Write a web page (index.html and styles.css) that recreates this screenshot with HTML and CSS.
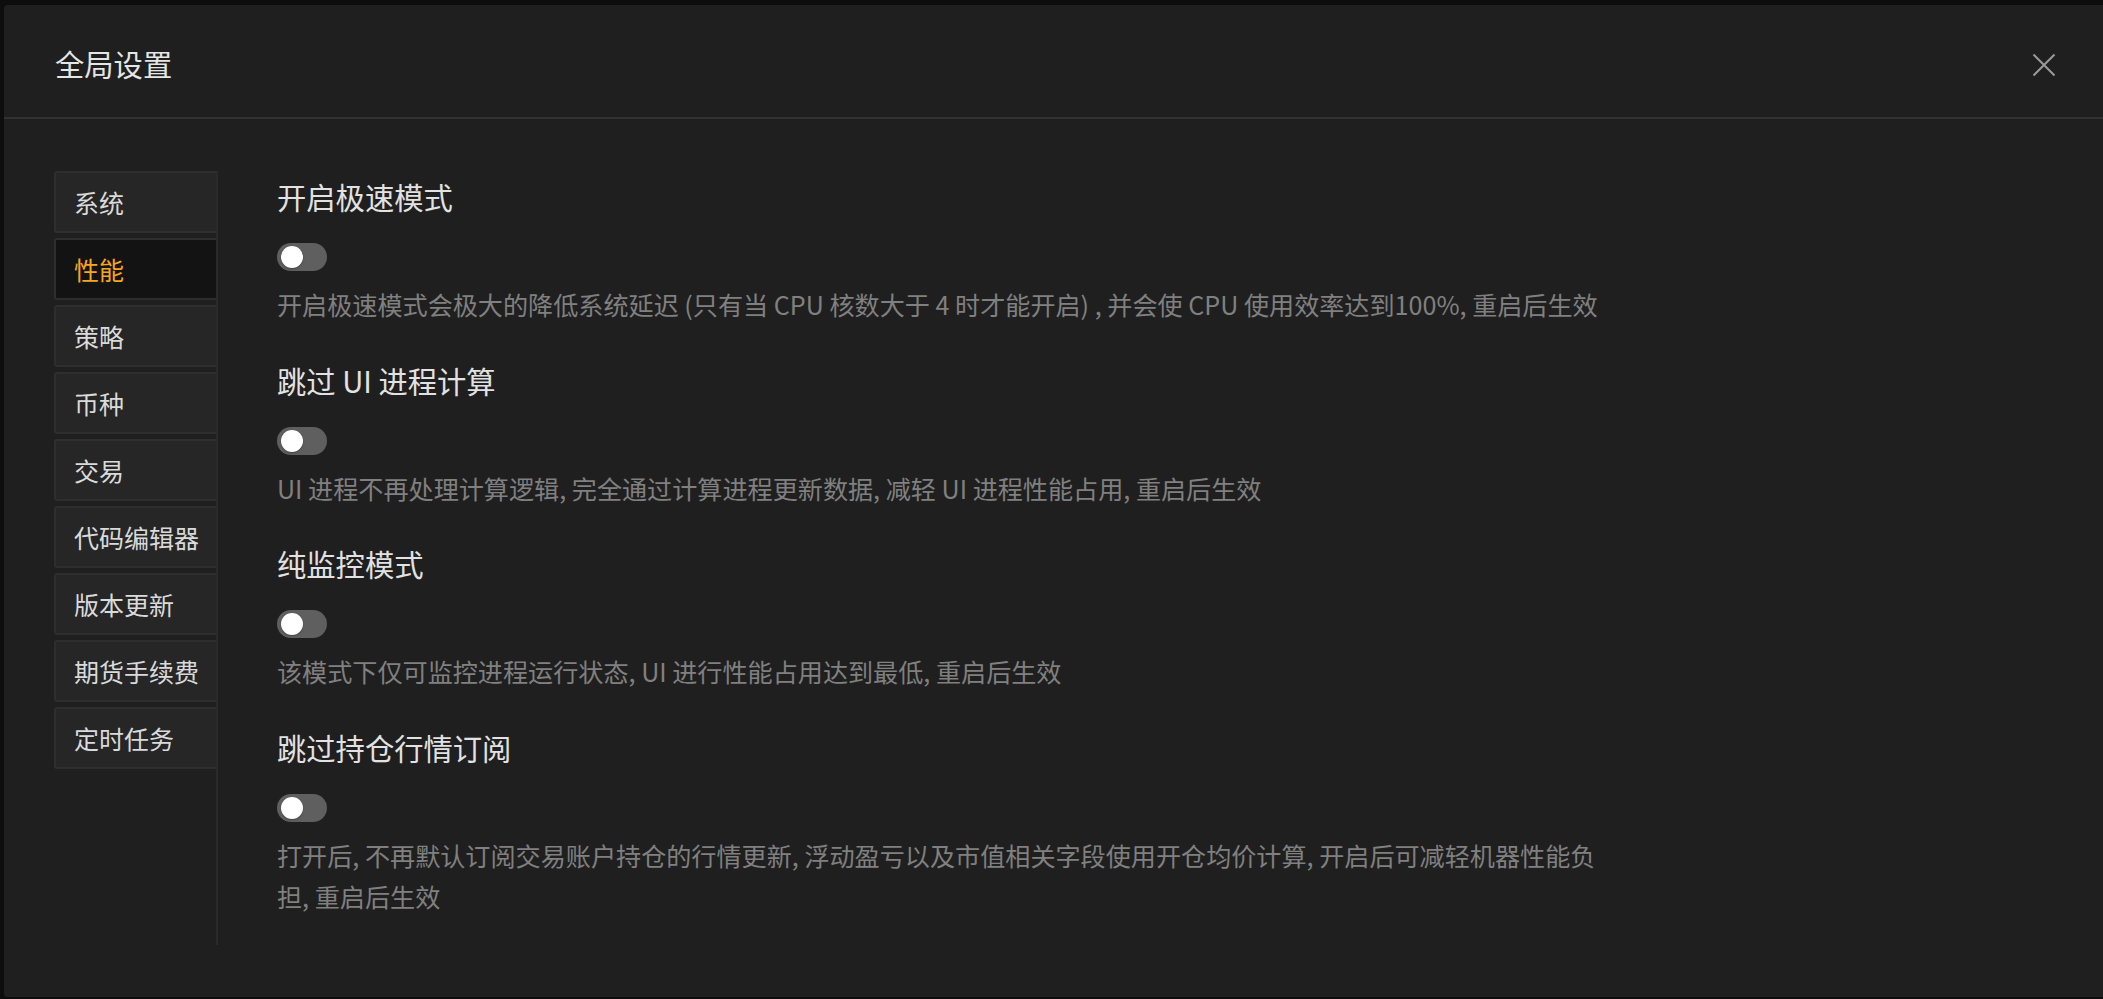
FILE: index.html
```html
<!DOCTYPE html>
<html lang="zh-CN">
<head>
<meta charset="utf-8">
<title>全局设置</title>
<link rel="stylesheet" href="styles.css">
</head>
<body>
<div class="backdrop">
  <div class="modal">
    <header class="modal-header">
      <h1 class="modal-title">全局设置</h1>
      <button class="close" aria-label="关闭">
        <svg width="24" height="24" viewBox="0 0 24 24"><path d="M1.5 1.5 L22.5 22.5 M22.5 1.5 L1.5 22.5" stroke="#9a9a9a" stroke-width="2" fill="none"/></svg>
      </button>
    </header>
    <div class="modal-body">
      <nav class="tabs">
        <div class="tab">系统</div>
        <div class="tab active">性能</div>
        <div class="tab">策略</div>
        <div class="tab">币种</div>
        <div class="tab">交易</div>
        <div class="tab">代码编辑器</div>
        <div class="tab">版本更新</div>
        <div class="tab">期货手续费</div>
        <div class="tab">定时任务</div>
      </nav>
      <main class="content">
        <section class="setting">
          <h2 class="setting-title">开启极速模式</h2>
          <div class="switch"><span class="knob"></span></div>
          <p class="setting-desc">开启极速模式会极大的降低系统延迟 (只有当 CPU 核数大于 4 时才能开启) , 并会使 CPU 使用效率达到100%, 重启后生效</p>
        </section>
        <section class="setting">
          <h2 class="setting-title">跳过 UI 进程计算</h2>
          <div class="switch"><span class="knob"></span></div>
          <p class="setting-desc">UI 进程不再处理计算逻辑, 完全通过计算进程更新数据, 减轻 UI 进程性能占用, 重启后生效</p>
        </section>
        <section class="setting">
          <h2 class="setting-title">纯监控模式</h2>
          <div class="switch"><span class="knob"></span></div>
          <p class="setting-desc">该模式下仅可监控进程运行状态, UI 进行性能占用达到最低, 重启后生效</p>
        </section>
        <section class="setting">
          <h2 class="setting-title">跳过持仓行情订阅</h2>
          <div class="switch"><span class="knob"></span></div>
          <p class="setting-desc">打开后, 不再默认订阅交易账户持仓的行情更新, 浮动盈亏以及市值相关字段使用开仓均价计算, 开启后可减轻机器性能负担, 重启后生效</p>
        </section>
      </main>
    </div>
  </div>
</div>
</body>
</html>
```

FILE: styles.css
```css
html, body {
  margin: 0;
  padding: 0;
  height: 100%;
  background: #0d0d0d;
}

body {
  font-family: "Noto Sans CJK SC", "Noto Sans", sans-serif;
  overflow: hidden;
}

.backdrop {
  box-sizing: border-box;
  height: 999px;
  padding: 5px 0 2px 4px;
  display: flex;
}

.modal {
  flex: 1;
  display: flex;
  flex-direction: column;
  background: #1f1f1f;
  border-radius: 4px 0 0 4px;
}

.modal-header {
  box-sizing: border-box;
  height: 114px;
  padding: 3px 47px 0 51px;
  border-bottom: 2px solid #323232;
  display: flex;
  align-items: center;
  justify-content: space-between;
}

.modal-title {
  margin: 0;
  font-size: 29.3px;
  line-height: 44px;
  font-weight: 400;
  color: #e6e6e6;
}

.close {
  width: 24px;
  height: 24px;
  margin-top: 4px;
  padding: 0;
  border: 0;
  background: transparent;
  display: flex;
}

.modal-body {
  flex: 1;
  display: flex;
  padding: 52px 50px 52px 50px;
  min-height: 0;
}

.tabs {
  width: 164px;
  flex: none;
  box-sizing: border-box;
  border-right: 2px solid #2a2a2a;
  display: flex;
  flex-direction: column;
  gap: 5px;
}

.tab {
  box-sizing: border-box;
  height: 62px;
  border: 2px solid #2e2e2e;
  border-right: 0;
  border-radius: 3px 0 0 3px;
  background: #262626;
  color: #dadada;
  font-size: 25px;
  padding-left: 18px;
  display: flex;
  align-items: center;
}

.tab.active {
  background: #131313;
  color: #f5a623;
}

.content {
  flex: 1;
  padding: 3px 0 0 59px;
}

.setting {
  margin-bottom: 32px;
}

.setting-title {
  margin: 0;
  font-size: 29.3px;
  line-height: 44px;
  font-weight: 400;
  color: #e2e2e2;
}

.switch {
  position: relative;
  margin-top: 25px;
  width: 50px;
  height: 28px;
  border-radius: 14px;
  background: #5f5f5f;
}

.knob {
  position: absolute;
  left: 4px;
  top: 3px;
  width: 22px;
  height: 22px;
  border-radius: 50%;
  background: #ffffff;
  box-shadow: 0 1px 2px rgba(0, 0, 0, 0.3);
}

.setting-desc {
  margin: 13px 0 0;
  max-width: 1335px;
  font-size: 25.12px;
  line-height: 41.5px;
  color: #808080;
}
```
